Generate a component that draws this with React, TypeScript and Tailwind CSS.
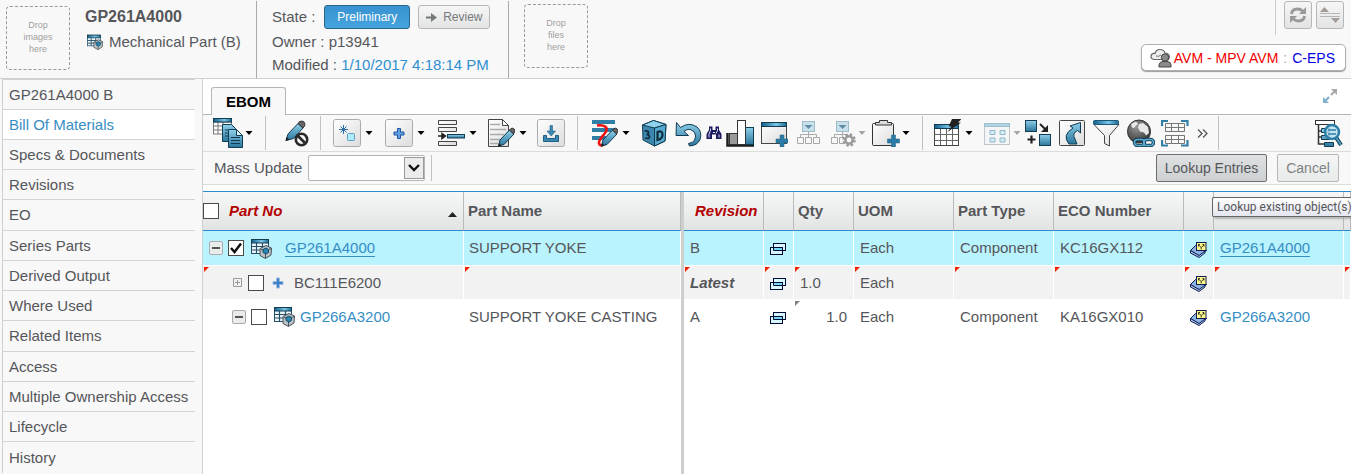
import React, { useId } from "react";

const NAV = [
  "GP261A4000 B",
  "Bill Of Materials",
  "Specs & Documents",
  "Revisions",
  "EO",
  "Series Parts",
  "Derived Output",
  "Where Used",
  "Related Items",
  "Access",
  "Multiple Ownership Access",
  "Lifecycle",
  "History",
];

const D = "#123c52";
const B = "#2f7ea6";
const K = "#333333";

/* Gradients shared by every toolbar drawing */
function Defs() {
  return (
    <svg width="0" height="0" className="absolute" aria-hidden="true">
      <defs>
        <linearGradient id="blue" x1="0" y1="0" x2="0" y2="1">
          <stop offset="0" stopColor="#8fd0ea" />
          <stop offset="1" stopColor="#2b759c" />
        </linearGradient>
        <linearGradient id="head" x1="0" y1="0" x2="1" y2="0">
          <stop offset="0" stopColor="#0f5f8c" />
          <stop offset="0.6" stopColor="#7cc6e6" />
          <stop offset="1" stopColor="#1b6a92" />
        </linearGradient>
        <linearGradient id="paper" x1="0" y1="0" x2="1" y2="1">
          <stop offset="0" stopColor="#ffffff" />
          <stop offset="1" stopColor="#dcdcdc" />
        </linearGradient>
        <radialGradient id="globe" cx="0.4" cy="0.3" r="0.8">
          <stop offset="0" stopColor="#999999" />
          <stop offset="1" stopColor="#2a2a2a" />
        </radialGradient>
      </defs>
    </svg>
  );
}

type SvgProps = { w?: number; h?: number; children: React.ReactNode };
function Svg({ w = 28, h = 28, children }: SvgProps) {
  return (
    <svg width={w} height={h} viewBox={`0 0 ${w} ${h}`} fill="none" className="shrink-0" aria-hidden="true">
      {children}
    </svg>
  );
}

const Pencil = () => (
  <g>
    <path d="M11.500 27l1.500-6 9.500-10 4.500 4-10 10.500z" fill="url(#blue)" stroke={D} />
    <path d="M22.500 11l1.500-1.500q2-.8 3.200.5t.3 3L26.500 15z" fill="#666" stroke="#333" />
    <path d="M11 27.500l1-3.500 2.500 2.500z" fill="#222" />
  </g>
);

const BigPlus = ({ x, y }: { x: number; y: number }) => (
  <path d={`M${x + 4} ${y}h4v4h4v4h-4v4h-4v-4h-4v-4h4z`} fill="#2b7ba4" stroke="#1f6286" strokeWidth=".5" />
);

const TableDocs = () => (
  <Svg w={30} h={30}>
    <rect x=".5" y="4" width="18" height="12" fill="#fff" stroke="#777" />
    <path d="M.5 8h18M.5 12h18M5 4v12M10 4v12" stroke="#777" />
    <rect x=".5" y=".5" width="18" height="3.500" fill="url(#head)" stroke={D} />
    <path d="M9.500 6.500h9l4 4v13h-13z" fill="url(#blue)" stroke={D} />
    <path d="M15.500 11.500h8l6 6v12h-14z" fill="url(#blue)" stroke={D} />
    <path d="M23.500 11.500v6h6z" fill="#d7f0fa" stroke={D} />
    <path d="M18 19.500h9M18 22.500h9M18 25.500h9M12 12h3M12 15h3M12 18h3" stroke={D} />
  </Svg>
);

const PencilBan = () => (
  <Svg w={26}>
    <path d="M2 21.500l2-6.500 10-10.500 5 4.500-9.500 10.500z" fill="url(#blue)" stroke={D} />
    <path d="M14 4.500l1.500-2q3-1 4.500.5t.5 4L19 9z" fill="#666" stroke="#333" />
    <path d="M1.500 22l1-4 3 2.500z" fill="#222" />
    <circle cx="17.500" cy="20.500" r="5.700" fill="#f8f8f8" stroke="#2a2a2a" strokeWidth="2.600" />
    <path d="M13.500 16.500l8 8" stroke="#2a2a2a" strokeWidth="2.600" />
  </Svg>
);

const Frame = ({ children }: { children: React.ReactNode }) => (
  <Svg>
    <rect x=".5" y=".5" width="27" height="27" rx="2" fill="url(#paper)" stroke="#a9abaf" />
    {children}
  </Svg>
);

const NewBox = () => (
  <Frame>
    <path d="M10.500 6v9M6 10.500h9M7.500 7.500l6 6M13.500 7.500l-6 6" stroke="#2c6fa8" />
    <rect x="14.500" y="14.500" width="7" height="7" rx="1" fill="#aeeaf8" stroke="#5b9fc4" />
  </Frame>
);

const AddBox = () => (
  <Frame>
    <path d="M12.500 9.500h3v3.500h3.500v3h-3.500v3.500h-3V16H9v-3h3.500z" fill="#5f9fe0" stroke="#1f55a5" />
  </Frame>
);

const InsertRows = () => (
  <Svg>
    <path d="M1.500 1.500h18v4h-18zM1.500 8.500h18v4h-18zM1.500 22.500h18v4h-18z" fill="url(#paper)" stroke="#444" />
    <path d="M1 17h5M5 14.500l3.500 2.500L5 19.500z" fill="#222" stroke="#222" strokeWidth="1.500" />
    <rect x="10.500" y="15.500" width="17" height="3.500" fill="url(#blue)" stroke={D} />
  </Svg>
);

const DocEdit = () => (
  <Svg>
    <path d="M1.500.5h14l6 6v21h-20z" fill="url(#paper)" stroke="#444" />
    <path d="M15.500.5v6h6z" fill="#fff" stroke="#444" />
    <path d="M3 5.500h10M3 10.500h16M3 15.500h14M3 20.500h10M3 24.500h8" stroke="#aaa" strokeWidth="1.300" />
    <Pencil />
  </Svg>
);

const Download = () => (
  <Frame>
    <path d="M6.500 16.500h3v3h9v-3h3v6h-15z" fill="#3c87ae" stroke="#1c5f86" />
    <path d="M13 6.500h2.500v5.500h3L14.200 17 10 12h3z" fill="#3c87ae" stroke="#1c5f86" strokeWidth=".6" />
  </Frame>
);

const Markup = () => (
  <Svg>
    <path d="M2 1h23v4H2zM2 9h23v4H2zM2 17h14v4H2z" fill={B} />
    <path d="M7 6.500c8-1 11 2 9 6s-8 8-7 12c1 3 4 2 6 0" stroke="#ee1111" strokeWidth="2.600" />
    <Pencil />
  </Svg>
);

const Cube = () => (
  <Svg>
    <path d="M2.500 6l11-4.500L26 5.500l-1 16.500-10.500 5L3 21z" fill="#3c87ae" stroke={D} />
    <path d="M2.500 6l11-4.500L26 5.500 14.500 9z" fill="#8fd3ee" stroke={D} />
    <path d="M14.500 9L26 5.500l-1 16.500-10.500 5z" fill="#56a9cf" stroke={D} />
    <path d="M4.500 12q4-.5 4 1.500t-2 2q3 .3 3 2.500t-4.500 1" stroke="#102c3c" strokeWidth="1.700" />
    <path d="M17.500 13v8q5-1 5-5.500t-5-2.500z" stroke="#102c3c" strokeWidth="2.200" />
  </Svg>
);

const Undo = () => (
  <Svg>
    <path
      d="M2.500 3.500L2 16.500h12.500l-4.500-4q5-4 9-.5t1.500 9q-1.500 3-6 3.500l1 2.500q8-.5 10.500-6.500 2.500-8-3-12.500-8-5.500-16.500.5z"
      fill="url(#blue)"
      stroke={D}
    />
  </Svg>
);

const Binoculars = () => (
  <Svg w={16} h={16}>
    <path d="M3 1.500h3.500V5h3V1.500H13V5l2.500 4v5h-5.500V9.500H6V14H.5V9L3 5z" fill="#1b1b60" />
    <path d="M4.500 3.500v2l-1.500 3.500v3.500M11.500 3.500v2l-1.500 3M13 9.500v3M7 7.500h2" stroke="#dfdff2" />
  </Svg>
);

const Chart = () => (
  <Svg>
    <path d="M1.500 14v12.500H28" stroke="#1d1d1d" strokeWidth="2.500" />
    <rect x="3.500" y="14.500" width="8" height="11" fill="#9a9a9a" stroke="#333" />
    <rect x="19.500" y="8.500" width="8" height="17" fill="url(#blue)" stroke={D} />
    <rect x="11.500" y="1.500" width="8" height="24" fill="#fff" stroke="#333" />
  </Svg>
);

const WindowPlus = () => (
  <Svg>
    <rect x="1.500" y="3.500" width="25" height="21" fill="url(#paper)" stroke="#444" />
    <rect x="1.500" y="3.500" width="25" height="4" fill="url(#head)" stroke={D} />
    <BigPlus x={16} y={16} />
  </Svg>
);

const Tree = ({ gear = false }: { gear?: boolean }) => (
  <Svg>
    <rect x="8.500" y="2.500" width="12" height="10" fill="#c9dfea" stroke="#9dbccb" />
    <path d="M10.500 6h8l-4 4z" fill="#5e8ea8" />
    <path d="M14.500 13v5M6.500 18v-2.500h16V18" stroke="#aaa" />
    <path d="M3.500 18.500h6v6h-6zM11.500 18.500h6v6h-6zM19.500 18.500h6v6h-6z" fill="#f8f8f8" stroke="#a8a8a8" />
    {gear && (
      <g>
        <circle cx="21" cy="21" r="6.500" fill="#f8f8f8" />
        <circle cx="21" cy="21" r="5.500" stroke="#9b9b9b" strokeWidth="2.500" strokeDasharray="2.500 1.820" />
        <circle cx="21" cy="21" r="3.700" stroke="#9b9b9b" strokeWidth="2.600" />
      </g>
    )}
  </Svg>
);

const Clipboard = () => (
  <Svg>
    <rect x=".5" y="4.500" width="21" height="22" rx="1" fill="url(#paper)" stroke="#333" />
    <path d="M3.500 6V3.500h4v-2h8v2h4V6z" fill="#ddd" stroke="#333" />
    <BigPlus x={15.500} y={16} />
  </Svg>
);

const TableBolt = () => (
  <Svg>
    <rect x="1.500" y="5.500" width="24" height="21" fill="#fff" stroke="#444" />
    <path d="M1.500 15.500h24M1.500 21.500h24M7.500 10v16M13.500 10v16M19.500 10v16" stroke="#666" />
    <rect x="1.500" y="5.500" width="24" height="4" fill="url(#head)" stroke={D} />
    <path d="M19 0h9.500l-3.500 3.500h3L14.500 13l4-5.500h-3z" fill="#222" />
  </Svg>
);

const FormGrid = () => (
  <Svg>
    <rect x="1.500" y="4.500" width="25" height="21" fill="#f3f5f6" stroke="#bfc5c9" />
    <rect x="1.500" y="4.500" width="25" height="3" fill="#b4d3e0" stroke="#9dc0cf" />
    <path d="M7 11.500h5v4H7zM17 11.500h5v4h-5zM7 19h5v4H7zM17 19h5v4h-5z" fill="#d7ebf3" stroke="#8eb8cb" />
  </Svg>
);

const Swap = () => (
  <Svg>
    <rect x=".5" y="1.500" width="11" height="11" fill="url(#blue)" stroke={D} />
    <rect x="14.500" y="15.500" width="11" height="11" fill="url(#blue)" stroke={D} />
    <path d="M15 5l6 6" stroke="#222" strokeWidth="2" />
    <path d="M23 6v7h-7z" fill="#222" />
    <path d="M6.500 16.500v8M2.500 20.500h8" stroke="#222" strokeWidth="2.200" />
  </Svg>
);

const ArrowBox = () => (
  <Svg>
    <rect x=".5" y="1.500" width="25" height="25" rx="1" fill="url(#paper)" stroke="#444" />
    <path d="M11 7l10.500-3.500v10.500l-3-2.500q-6 3-2.500 8.500l2 5h-8Q2.500 16 14 9z" fill="url(#blue)" stroke={D} />
  </Svg>
);

const Funnel = () => (
  <Svg>
    <path d="M1 5.500h25l-9.500 11v10.500l-5-2.500v-8z" fill="url(#paper)" stroke="#444" />
    <rect x=".5" y="1.500" width="25" height="4" rx="1" fill="url(#head)" stroke="#1b5878" />
  </Svg>
);

const Globe = () => (
  <Svg>
    <circle cx="12" cy="12.500" r="11.500" fill="url(#globe)" stroke="#333" />
    <path d="M4 5l5-2.500 2 2.500-2 1.500-2 2.500-2-.5zM12 5l4-1 5 4 1 6-3 2.500-2-3-4-1-2-4z" fill="#e8e8e8" />
    <rect x="7.500" y="20.500" width="10" height="6" rx="3" stroke={D} strokeWidth="3.500" />
    <rect x="16.500" y="20.500" width="10" height="6" rx="3" stroke={D} strokeWidth="3.500" />
    <rect x="7.500" y="20.500" width="10" height="6" rx="3" stroke="#5cabd0" strokeWidth="1.500" />
    <rect x="16.500" y="20.500" width="10" height="6" rx="3" stroke="#5cabd0" strokeWidth="1.500" />
  </Svg>
);

const GridFocus = () => (
  <Svg>
    <path d="M1 7V2h6M20 2h6.500v5M1 21v5.500h6M20 26.500h6.500V21" stroke={B} strokeWidth="2.200" />
    <path
      d="M4.500 4.500h19v8h-19zM4.500 8.500h19M10.500 4.500v8M17.500 4.500v8M4.500 16.500h19v8h-19zM4.500 20.500h19M10.500 16.500v8M17.500 16.500v8"
      stroke="#777"
    />
  </Svg>
);

const FindTree = () => (
  <Svg>
    <rect x=".5" y="1.500" width="19" height="4" fill="#fff" stroke={K} />
    <path d="M3.500 6v19h6M3.500 12h4M3.500 18h4" stroke={K} strokeWidth="1.500" />
    <path d="M6.500 9.500h8v4h-8zM6.500 16.500h8v4h-8zM9.500 23.500h9v4h-9z" fill="url(#blue)" stroke={D} />
    <circle cx="17" cy="13" r="7" fill="#b7dff0" fillOpacity=".8" stroke="#2e7fa8" strokeWidth="2.500" />
    <path d="M13 11h8M13 15h8" stroke={B} strokeWidth="1.500" />
    <path d="M21.500 19l4.500 7" stroke={D} strokeWidth="4" />
    <path d="M21.500 19l4.500 7" stroke="#4e9cc2" strokeWidth="2" />
  </Svg>
);

const PartIcon = ({ size = 21 }: { size?: number }) => (
  <svg width={size} height={size} viewBox="0 0 21 21" fill="none" className="shrink-0" aria-hidden="true">
    <rect x=".5" y="1.500" width="17" height="14" fill="#eef6fa" stroke="#24506a" />
    <path d="M.5 8.500h17M.5 12h17M5.500 5v10.500M11.500 5v10.500" stroke="#24506a" strokeWidth="1.200" />
    <rect x=".5" y="1.500" width="17" height="3.500" fill="url(#head)" stroke={D} />
    <path d="M9 10.500L15 7.500l5.500 2.500-.5 7-5.500 3.500-5.500-3z" fill="#bcc3c7" stroke="#46525a" />
    <path d="M9.500 11l5 2 5.500-2.500M14.500 13v7" stroke="#46525a" />
    <path d="M12 11.500l3-1.500 2.500 1.500v3L15 16l-3-1.500z" fill="#2b86b3" stroke="#174b66" />
  </svg>
);

const PopupIcon = () => (
  <Svg w={17} h={14}>
    <rect x="4.500" y="1.500" width="12" height="7" fill="#d8f8ff" stroke="#000838" />
    <rect x="1.500" y="5.500" width="12" height="7" fill="#d8f8ff" stroke="#000838" />
    <rect x="5" y="6" width="8" height="2.500" fill="#74d9f4" />
    <path d="M4.500 5v3.500H14" stroke="#000838" />
  </Svg>
);

const EcoIcon = () => (
  <Svg w={17} h={17}>
    <path d="M.5 9.500l5-5 11 5-7 5.500z" fill="#8db4e4" stroke="#101c50" />
    <path d="M.5 9.500v2.500l8.500 4.500 6-4.500V10l-6 4.500z" fill="#a9c6ec" stroke="#101c50" />
    <rect x="6.500" y="1.500" width="9.500" height="8" fill="#fff98c" stroke="#101c50" />
    <path d="M11.200 8.500V6.500L8.500 4M11.200 6.500L14 4M8.500 5.500v-2H10M12.500 3.500H14v2" stroke="#111" strokeWidth=".8" />
  </Svg>
);

type ToolProps = { label: string; gap: string; menu?: string; off?: boolean; children: React.ReactNode };
function Tool({ label, gap, menu, off, children }: ToolProps) {
  return (
    <button type="button" aria-label={label} disabled={off} className={`flex shrink-0 items-center ${gap}`}>
      {children}
      {menu && (
        <svg width="8" height="4" viewBox="0 0 8 4" className={menu} aria-hidden="true">
          <path d="M.5 0h7L4 4z" fill={off ? "#a5a5a5" : "#000"} />
        </svg>
      )}
    </button>
  );
}

const Sep = ({ gap }: { gap: string }) => <span className={`h-[34px] w-px shrink-0 bg-[#c2c2c2] ${gap}`} />;

function Check({ label, checked }: { label: string; checked?: boolean }) {
  return (
    <span className="relative inline-flex size-4 shrink-0">
      <input
        type="checkbox"
        aria-label={label}
        defaultChecked={checked}
        className="peer size-4 appearance-none border border-[#4a4a4a] bg-white"
      />
      <svg
        width="16"
        height="16"
        viewBox="0 0 16 16"
        fill="none"
        className="pointer-events-none absolute inset-0 opacity-0 peer-checked:opacity-100"
        aria-hidden="true"
      >
        <path d="M3 8l3.500 4L13 3.500" stroke="#111" strokeWidth="2.500" />
      </svg>
    </span>
  );
}

function Collapse({ label }: { label: string }) {
  return (
    <button
      type="button"
      aria-label={label}
      className="flex size-[14px] shrink-0 items-center justify-center rounded-[2px] border border-[#a9abab] bg-[#ebebeb]"
    >
      <span className="h-0.5 w-2 bg-[#555]" />
    </button>
  );
}

const Mark = ({ grey }: { grey?: boolean }) => (
  <svg width="5" height="5" viewBox="0 0 5 5" className="absolute top-px left-px" aria-hidden="true">
    <path d="M0 0h5L0 5z" fill={grey ? "#808080" : "#ee2200"} />
  </svg>
);

type CellProps = { children?: React.ReactNode; mark?: boolean; grey?: boolean; cls?: string };
const Cell = ({ children, mark, grey, cls = "pl-1.5" }: CellProps) => (
  <td className={`relative border-r border-b border-white whitespace-nowrap ${cls}`}>
    {(mark || grey) && <Mark grey={grey} />}
    {children}
  </td>
);

const Head = ({ children, cls = "pl-1" }: { children?: React.ReactNode; cls?: string }) => (
  <th
    className={`border-r border-b border-r-[#b9bbbb] border-b-[#2b8acb] bg-linear-to-b from-[#f6f7f7] to-[#e2e4e3] text-left font-bold whitespace-nowrap ${cls}`}
  >
    {children}
  </th>
);

const ROW1 = "h-[35px] bg-[#b9f3fe]";
const ROW2 = "h-[34px] bg-[#f2f2f2]";
const ROW3 = "h-[34px] bg-white";
const LINK = "text-[#368ec4]";

function Header() {
  return (
    <header className="flex min-h-[79px] items-start border-b border-[#d0d0d0] bg-[#f8f8f8]">
      <DropBox lines={["Drop", "images", "here"]} cls="mt-1.5 ml-1.5" />
      <div className="ml-[15px] w-[171px] pt-[7px]">
        <h1 className="text-[16px] leading-5 font-bold">GP261A4000</h1>
        <p className="mt-[3px] flex items-center gap-1.5 leading-6 whitespace-nowrap">
          <span className="ml-0.5 flex">
            <PartIcon size={16} />
          </span>
          Mechanical Part (B)
        </p>
      </div>
      <span className="h-[77px] w-px self-end bg-[#aaa]" />
      <div className="ml-[15px] w-[236px] pt-1">
        <div className="flex h-[26px] items-center">
          <span>State :</span>
          <button
            type="button"
            className="ml-[9px] h-6 w-[86px] rounded-[3px] border border-[#2a6588] bg-linear-to-b from-[#3893d0] to-[#45a3dd] text-[12px] text-white"
          >
            Preliminary
          </button>
          <button
            type="button"
            className="ml-2 flex h-6 w-[72px] items-center justify-center gap-1.5 rounded-[3px] border border-[#b4b6ba] bg-linear-to-b from-[#f6f6f6] to-[#e2e4e3] text-[12px] text-[#77797c]"
          >
            <svg width="11" height="9" viewBox="0 0 11 9" aria-hidden="true">
              <path d="M0 3.500h5V0l6 4.500L5 9V5.500H0z" fill="#77797c" />
            </svg>
            Review
          </button>
        </div>
        <p className="leading-[23px]">Owner : p13941</p>
        <p className="leading-[23px]">
          Modified :{" "}
          <a href="#modified" className="text-[#2f8fd0]">
            1/10/2017 4:18:14 PM
          </a>
        </p>
      </div>
      <span className="h-[77px] w-px self-end bg-[#aaa]" />
      <DropBox lines={["Drop", "files", "here"]} cls="mt-1 ml-[15px]" />
      <div className="ml-auto flex flex-col items-end">
        <div className="mr-[7px] flex h-[35px] gap-1 border-l border-[#ccc] pt-px pl-2">
          <button
            type="button"
            aria-label="Refresh"
            className="flex size-7 items-center justify-center rounded-[3px] border border-[#b4b6ba] bg-linear-to-b from-[#f6f6f6] to-[#e2e4e3]"
          >
            <svg width="18" height="16" viewBox="0 0 18 16" fill="none" aria-hidden="true">
              <path d="M2.500 7Q3 2 8.500 2q3 0 5 2M15.500 9Q15 14 9.500 14q-3 0-5-2" stroke="#999" strokeWidth="2.800" />
              <path d="M17 0v7h-7zM1 16V9h7z" fill="#999" />
            </svg>
          </button>
          <button
            type="button"
            aria-label="Collapse header"
            className="flex size-7 items-center justify-center rounded-[3px] border border-[#b4b6ba] bg-linear-to-b from-[#f6f6f6] to-[#e2e4e3]"
          >
            <svg width="20" height="16" viewBox="0 0 20 16" className="shrink-0" aria-hidden="true">
              <path d="M0 5l4.500-5L9 5zM11 11h9l-4.500 5z" fill="#a39c98" />
              <path d="M0 6h20v1H0zM0 9h20v1H0z" fill="#b5b5b5" />
            </svg>
          </button>
        </div>
        <a
          href="#context"
          className="mt-[9px] mr-[5px] flex h-[27px] items-center rounded-[5px] border border-[#b0b0b0] bg-white pr-2.5 pl-2 text-[14px] whitespace-nowrap shadow-[0_1px_1px_#999]"
        >
          <svg width="22" height="20" viewBox="0 0 22 20" fill="none" className="mr-0.5" aria-hidden="true">
            <path
              d="M4 11.500Q.5 11 1 8t4-2.500Q6 1.500 10 1.500t5 3.500q4 0 4.500 4l-1 2.500z"
              fill="#eee"
              stroke="#666"
              strokeWidth="1.200"
            />
            <path d="M6 8q3 1 5-1" stroke="#777" />
            <circle cx="15" cy="9.500" r="3.700" fill="#8b8b8b" stroke="#444" />
            <path d="M9 19v-2.500q1-3 4-3h4q3.500 0 4 3V19z" fill="#8b8b8b" stroke="#444" />
          </svg>
          <span className="text-[#f00000]">AVM - MPV AVM</span>
          <span className="px-[5px] text-[#aaa]">:</span>
          <span className="text-[#0000e8]">C-EPS</span>
        </a>
      </div>
    </header>
  );
}

function DropBox({ lines, cls }: { lines: string[]; cls: string }) {
  return (
    <div
      className={`flex size-16 shrink-0 flex-col items-center justify-center rounded-[4px] border border-dashed border-[#999] pb-0.5 text-[9px] leading-3 text-[#a0a0a0] ${cls}`}
    >
      {lines.map((line) => (
        <span key={line}>{line}</span>
      ))}
    </div>
  );
}

function Toolbar() {
  return (
    <div className="flex h-[37px] items-center border-b border-[#dcdcdc] bg-[#f8f8f8] pl-2.5">
      <Tool label="Copy structure" gap="" menu="ml-0.5"><TableDocs /></Tool>
      <Sep gap="ml-3" />
      <Tool label="Disable edit" gap="ml-4.5"><PencilBan /></Tool>
      <Sep gap="ml-2.5" />
      <Tool label="Create new" gap="ml-3" menu="ml-1"><NewBox /></Tool>
      <Tool label="Add existing" gap="ml-3" menu="ml-1"><AddBox /></Tool>
      <Tool label="Insert row" gap="ml-3" menu="ml-1"><InsertRows /></Tool>
      <Tool label="Edit document" gap="ml-2.5" menu="ml-1"><DocEdit /></Tool>
      <Tool label="Download" gap="ml-2.5"><Download /></Tool>
      <Sep gap="ml-3" />
      <Tool label="Markup" gap="ml-3" menu="ml-1"><Markup /></Tool>
      <Tool label="3D view" gap="ml-2.5"><Cube /></Tool>
      <Tool label="Undo" gap="ml-1.5"><Undo /></Tool>
      <Tool label="Find" gap="ml-1"><Binoculars /></Tool>
      <Tool label="Chart" gap="ml-1"><Chart /></Tool>
      <Tool label="Add window" gap="ml-1.5"><WindowPlus /></Tool>
      <Tool label="Hierarchy" gap="ml-1.5" off><Tree /></Tool>
      <Tool label="Hierarchy settings" gap="ml-1.5" menu="ml-0.5" off><Tree gear /></Tool>
      <Tool label="Clipboard" gap="ml-1.5" menu="ml-0.5"><Clipboard /></Tool>
      <Sep gap="ml-3" />
      <Tool label="Table actions" gap="ml-2.5" menu="ml-1"><TableBolt /></Tool>
      <Tool label="Form view" gap="ml-2.5" menu="ml-0.5" off><FormGrid /></Tool>
      <Tool label="Replace" gap="ml-1"><Swap /></Tool>
      <Tool label="Open" gap="ml-1.5"><ArrowBox /></Tool>
      <Tool label="Filter" gap="ml-1.5"><Funnel /></Tool>
      <Tool label="Web link" gap="ml-1.5"><Globe /></Tool>
      <Tool label="Focus grid" gap="ml-1.5"><GridFocus /></Tool>
      <Tool label="More tools" gap="ml-2">
        <Svg w={11} h={9}>
          <path d="M1 .5l4 4-4 4M6 .5l4 4-4 4" stroke="#555" strokeWidth="1.300" />
        </Svg>
      </Tool>
      <Sep gap="ml-2.5" />
      <Tool label="Find in structure" gap="ml-auto mr-2"><FindTree /></Tool>
    </div>
  );
}

function FilterBar() {
  const id = useId();
  return (
    <div className="flex h-[33px] items-center border-b border-[#dcdcdc] bg-[#f8f8f8] pr-3 pl-[11px]">
      <label htmlFor={id}>Mass Update</label>
      <div className="relative ml-1.5 h-[26px] w-[117px]">
        <select id={id} className="size-full appearance-none rounded-[2px] border border-[#b4b6b8] bg-white" />
        <span className="pointer-events-none absolute top-0.5 right-px flex h-[22px] w-5 items-center justify-center border border-[#999] bg-[#ececec]">
          <svg width="12" height="8" viewBox="0 0 12 8" fill="none" aria-hidden="true">
            <path d="M1 1l5 5 5-5" stroke="#111" strokeWidth="2.400" />
          </svg>
        </span>
      </div>
      <span className="ml-1.5 h-[26px] w-px bg-[#c2c2c2]" />
      <div className="relative ml-auto">
        <button
          type="button"
          aria-describedby="lookup-tip"
          className="h-7 w-[111px] rounded-[2px] border border-[#6b6d70] bg-linear-to-b from-[#dfe1e2] to-[#cdd0d1] text-[14px]"
        >
          Lookup Entries
        </button>
        <span
          id="lookup-tip"
          role="tooltip"
          className="absolute top-[43px] left-14 z-10 h-5 w-[139px] rounded-l-[2px] border border-r-0 border-[#666] bg-linear-to-b from-white to-[#e4e5f0] pl-1 font-[Roboto,sans-serif] text-[12px] leading-[18px] whitespace-nowrap text-[#55565a] shadow-[2px_2px_2px_#8888]"
        >
          Lookup existing object(s)
        </span>
      </div>
      <button
        type="button"
        className="ml-2.5 h-7 w-[62px] rounded-[2px] border border-[#b4b6ba] bg-linear-to-b from-[#f6f6f6] to-[#e8e9e9] text-[14px] text-[#808285]"
      >
        Cancel
      </button>
    </div>
  );
}

function LeftTable() {
  return (
    <div className="w-[481px] shrink-0 border-r-[3px] border-[#cdcfcf]">
      <table className="w-full table-fixed border-separate border-spacing-0">
        <colgroup>
          <col className="w-[261px]" />
          <col />
        </colgroup>
        <thead>
          <tr className="h-[39px]">
            <Head cls="">
              <span className="flex items-center gap-2.5">
                <Check label="Select all parts" />
                <span className="text-[#b30000] italic">Part No</span>
                <svg width="9" height="5" viewBox="0 0 9 5" className="mt-1.5 mr-1.5 ml-auto" aria-hidden="true">
                  <path d="M4.500 0L9 5H0z" fill="#222" />
                </svg>
              </span>
            </Head>
            <Head>Part Name</Head>
          </tr>
        </thead>
        <tbody>
          <tr className={ROW1}>
            <Cell cls="pl-1.5">
              <span className="flex items-center gap-[5px]">
                <Collapse label="Collapse GP261A4000" />
                <Check label="Select GP261A4000" checked />
                <span className="ml-0.5 flex">
                  <PartIcon />
                </span>
                <a href="#GP261A4000" className={`ml-2 border-b border-current leading-[17px] ${LINK}`}>
                  GP261A4000
                </a>
              </span>
            </Cell>
            <Cell cls="pl-[5px]">SUPPORT YOKE</Cell>
          </tr>
          <tr className={ROW2}>
            <Cell mark cls="pl-[30px]">
              <span className="flex items-center">
                <button type="button" aria-label="Expand BC111E6200" className="flex">
                  <Svg w={9} h={9}>
                    <path d="M.5.5h8v8h-8zM2 4.500h5M4.500 2v5" stroke="#999" />
                  </Svg>
                </button>
                <span className="ml-1.5 flex">
                  <Check label="Select BC111E6200" />
                </span>
                <span className="mr-2.5 ml-2 flex">
                  <Svg w={12} h={12}>
                    <path d="M4.500 1h3v3.500H11v3H7.500V11h-3V7.500H1v-3h3.500z" fill="#3f7fcb" stroke="#9dbce2" />
                  </Svg>
                </span>
                BC111E6200
              </span>
            </Cell>
            <Cell mark />
          </tr>
          <tr className={ROW3}>
            <Cell cls="pl-[29px]">
              <span className="flex items-center gap-[5px]">
                <Collapse label="Collapse GP266A3200" />
                <Check label="Select GP266A3200" />
                <span className="ml-0.5 flex">
                  <PartIcon />
                </span>
                <a href="#GP266A3200" className={LINK}>
                  GP266A3200
                </a>
              </span>
            </Cell>
            <Cell cls="pl-[5px]">SUPPORT YOKE CASTING</Cell>
          </tr>
        </tbody>
      </table>
    </div>
  );
}

const Popup = ({ mark }: { mark?: boolean }) => (
  <Cell mark={mark} cls="pl-[5px]">
    <button type="button" aria-label="Open in new window" className="mt-0.5 flex">
      <PopupIcon />
    </button>
  </Cell>
);

const Eco = ({ mark }: { mark?: boolean }) => (
  <Cell mark={mark} cls="pl-1.5">
    <button type="button" aria-label="Show change order" className="mt-0.5 flex">
      <EcoIcon />
    </button>
  </Cell>
);

function RightTable() {
  return (
    <div className="min-w-0 flex-1">
      <table className="w-full table-fixed border-separate border-spacing-0">
        <colgroup>
          <col className="w-20" />
          <col className="w-[30px]" />
          <col className="w-[60px]" />
          <col className="w-[100px]" />
          <col className="w-[100px]" />
          <col className="w-[130px]" />
          <col className="w-[30px]" />
          <col className="w-[130px]" />
          <col />
        </colgroup>
        <thead>
          <tr className="h-[39px]">
            <Head cls="pl-[11px]">
              <span className="text-[#b30000] italic">Revision</span>
            </Head>
            <Head />
            <Head>Qty</Head>
            <Head>UOM</Head>
            <Head>Part Type</Head>
            <Head>ECO Number</Head>
            <Head />
            <Head />
            <Head />
          </tr>
        </thead>
        <tbody>
          <tr className={ROW1}>
            <Cell>B</Cell>
            <Popup />
            <Cell />
            <Cell>Each</Cell>
            <Cell>Component</Cell>
            <Cell>KC16GX112</Cell>
            <Eco />
            <Cell>
              <a href="#GP261A4000" className={`border-b border-current ${LINK}`}>
                GP261A4000
              </a>
            </Cell>
            <Cell />
          </tr>
          <tr className={ROW2}>
            <Cell mark>
              <b className="italic">Latest</b>
            </Cell>
            <Popup mark />
            <Cell mark>1.0</Cell>
            <Cell mark>Each</Cell>
            <Cell mark />
            <Cell mark />
            <Eco mark />
            <Cell mark />
            <Cell mark />
          </tr>
          <tr className={ROW3}>
            <Cell>A</Cell>
            <Popup />
            <Cell grey cls="pr-1.5 text-right">
              1.0
            </Cell>
            <Cell>Each</Cell>
            <Cell>Component</Cell>
            <Cell>KA16GX010</Cell>
            <Eco />
            <Cell>
              <a href="#GP266A3200" className={LINK}>
                GP266A3200
              </a>
            </Cell>
            <Cell />
          </tr>
        </tbody>
      </table>
    </div>
  );
}

export default function App() {
  return (
    <div className="flex min-h-screen flex-col overflow-hidden bg-white font-['Liberation_Sans',Arial,sans-serif] text-[15px] leading-[20px] text-[#55565a]">
      <Defs />
      <Header />
      <div className="flex flex-1">
        <nav className="w-[203px] shrink-0 border-r border-[#d0d0d0] bg-[#f8f8f8] pl-0.5">
          <ul className="grid min-h-[394px] content-start border-l border-[#d0d0d0] pr-[7px]">
            {NAV.map((item, i) => (
              <li
                key={item}
                className={`flex h-[30px] border-b border-[#d3d3d3] first:h-[31px] first:border-t last:border-b-0 nth-[4n+1]:h-[31px] ${i === 1 ? "bg-white" : ""}`}
              >
                <a href={`#nav-${i}`} className={`flex w-full items-center pl-1.5 whitespace-nowrap ${i === 1 ? "text-[#368ec4]" : ""}`}>
                  {item}
                </a>
              </li>
            ))}
          </ul>
        </nav>
        <main className="flex min-w-0 flex-1 flex-col">
          <div className="flex h-9 items-end justify-between border-b border-[#b4b6b8] pl-2">
            <button
              type="button"
              className="-mb-px h-7 rounded-t-[3px] border border-b-0 border-[#b4b6b8] bg-[#f8f8f8] px-[14px] font-bold text-black"
            >
              EBOM
            </button>
            <button type="button" aria-label="Expand panel" className="mr-[14px] mb-[11px]">
              <Svg w={14} h={14}>
                <path d="M8 0h6v6z" fill="#a8a8a8" />
                <path d="M8 6l4-4" stroke="#a8a8a8" strokeWidth="2.200" />
                <path d="M0 8v6h6z" fill="#7fb0cf" />
                <path d="M6 8l-4 4" stroke="#7fb0cf" strokeWidth="2.200" />
              </Svg>
            </button>
          </div>
          <Toolbar />
          <FilterBar />
          <div className="mt-1.5 flex flex-1 border-t border-[#2b8acb]">
            <LeftTable />
            <RightTable />
          </div>
        </main>
      </div>
    </div>
  );
}
